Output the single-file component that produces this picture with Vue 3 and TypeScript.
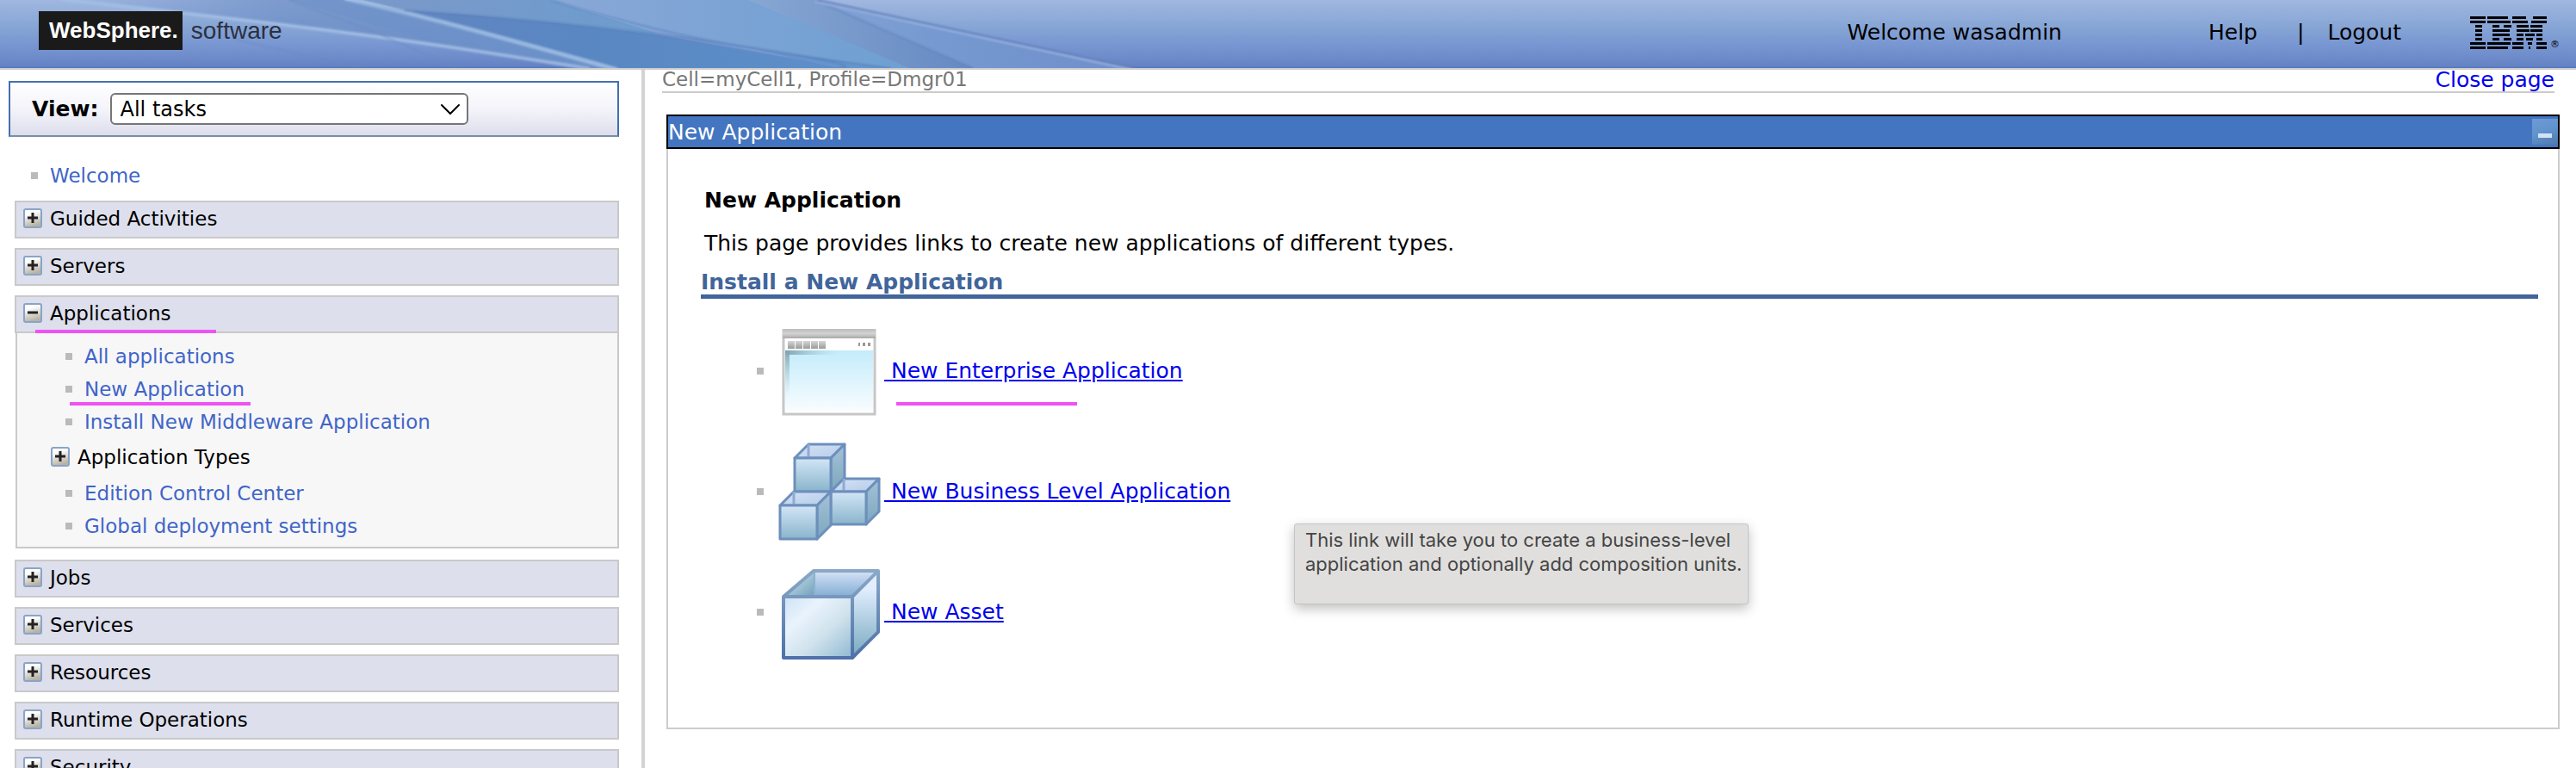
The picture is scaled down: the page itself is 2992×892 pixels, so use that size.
<script setup lang="ts">
import { ref } from 'vue'

interface TaskLink {
  label: string
  marked?: boolean
  folder?: boolean
}
interface TaskGroup {
  label: string
  open?: boolean
  marked?: boolean
  items?: TaskLink[]
}
interface Cube {
  front: string
  side: string
  top: string
  post: string
}

const view = ref('All tasks')
const panelOpen = ref(true)

const groups = ref<TaskGroup[]>([
  { label: 'Guided Activities' },
  { label: 'Servers' },
  {
    label: 'Applications',
    open: true,
    marked: true,
    items: [
      { label: 'All applications' },
      { label: 'New Application', marked: true },
      { label: 'Install New Middleware Application' },
      { label: 'Application Types', folder: true },
      { label: 'Edition Control Center' },
      { label: 'Global deployment settings' },
    ],
  },
  { label: 'Jobs' },
  { label: 'Services' },
  { label: 'Resources' },
  { label: 'Runtime Operations' },
  { label: 'Security' },
])

// Builds the faces of an open box: front rectangle plus a depth offset up and to the right.
function cube(x: number, y: number, w: number, h: number, dx: number, dy: number): Cube {
  return {
    front: `M${x} ${y}h${w}v${h}h${-w}z`,
    side: `M${x + w} ${y}l${dx} ${-dy}v${h}l${-dx} ${dy}z`,
    top: `M${x} ${y}l${dx} ${-dy}h${w}l${-dx} ${dy}z`,
    post: `M${x + dx} ${y - dy}v${dy}`,
  }
}
const cubes: Cube[] = [
  cube(20, 21, 42, 39, 16, 16),
  cube(62, 60, 41, 38, 15, 15),
  cube(3, 76, 43, 39, 16, 16),
]

// Stripes of the eight-bar logo, as [x, width] runs for each bar.
const bars: [number, number][][] = [
  [[0, 18], [20, 24], [49, 16], [73, 16]],
  [[0, 18], [20, 27], [49, 18], [71, 18]],
  [[6, 8], [26, 8], [39, 9], [54, 14], [70, 14]],
  [[6, 8], [26, 20], [54, 15], [70, 14]],
  [[6, 8], [26, 20], [54, 8], [64, 11], [77, 7]],
  [[6, 8], [26, 8], [39, 9], [54, 8], [65, 8], [77, 7]],
  [[0, 18], [20, 27], [49, 13], [67, 5], [77, 12]],
  [[0, 18], [20, 24], [49, 13], [68, 2], [77, 12]],
]
</script>

<template>
  <div class="console">
    <header class="banner">
      <svg class="waves" viewBox="0 0 1320 79" aria-hidden="true">
        <defs>
          <filter id="soft" x="-5%" y="-20%" width="110%" height="140%"><feGaussianBlur stdDeviation="1" /></filter>
          <linearGradient id="left" x1="0" x2="1" y1="0" y2="0">
            <stop offset="0" stop-color="#6b8cc8" stop-opacity="0" />
            <stop offset="0.4" stop-color="#6b8cc4" stop-opacity="0.65" />
            <stop offset="1" stop-color="#6c93c8" />
          </linearGradient>
          <linearGradient id="deep" x1="0" x2="1" y1="0" y2="0">
            <stop offset="0" stop-color="#6585c1" />
            <stop offset="0.5" stop-color="#5987c2" />
            <stop offset="1" stop-color="#5d8fc9" />
          </linearGradient>
          <linearGradient id="mid" x1="0" x2="1" y1="0" y2="0">
            <stop offset="0" stop-color="#7b98c9" />
            <stop offset="1" stop-color="#6b9dce" />
          </linearGradient>
          <linearGradient id="pale" x1="0" x2="1" y1="0" y2="0">
            <stop offset="0" stop-color="#89a8d7" />
            <stop offset="1" stop-color="#6e9fd2" />
          </linearGradient>
          <linearGradient id="fold" x1="0" x2="1" y1="0" y2="0">
            <stop offset="0" stop-color="#87a7d3" />
            <stop offset="1" stop-color="#6589c2" />
          </linearGradient>
          <linearGradient id="tail" x1="0" x2="1" y1="0" y2="0">
            <stop offset="0" stop-color="#83a3d5" />
            <stop offset="0.4" stop-color="#7599d0" />
            <stop offset="1" stop-color="#708ecb" />
          </linearGradient>
        </defs>
        <path d="M60 0H400L717 79H685Q380 28 60 0Z" fill="url(#left)" />
        <path d="M335 0H400L717 79H685L530 56Z" fill="#6b90ca" opacity="0.5" />
        <path d="M400 0L717 79H972Q900 64 774 42Q640 22 470 12Z" fill="url(#deep)" />
        <path d="M470 12Q640 24 774 42L640 0H420Z" fill="url(#mid)" />
        <path d="M640 0H870L1060 79H985Q850 55 774 38Z" fill="url(#pale)" />
        <path d="M870 0H946L1130 79H1056Z" fill="url(#fold)" />
        <path d="M946 0L1316 79H1130Z" fill="url(#tail)" />
        <path d="M880 58Q930 64 1035 79H972Z" fill="#6595cd" />
        <g fill="none" filter="url(#soft)">
          <path d="M70 -1Q260 20 380 35T685 80" stroke="#a5c0e6" stroke-width="4" opacity="0.8" />
          <path d="M400 -2Q500 20 717 81" stroke="#9cbce2" stroke-width="5" opacity="0.9" />
          <path d="M335 0L430 35L530 79" stroke="#6686bf" stroke-width="2" opacity="0.4" />
          <path d="M270 45L420 79" stroke="#6686bf" stroke-width="2" opacity="0.4" />
          <path d="M470 12Q680 26 850 52T972 79" stroke="#5a7eb9" stroke-width="2" opacity="0.7" />
          <path d="M640 0Q770 40 880 57T1035 79" stroke="#5e84bd" stroke-width="2" opacity="0.7" />
          <path d="M946 0L1130 79" stroke="#6485be" stroke-width="2" opacity="0.7" />
          <path d="M950 0L1318 79" stroke="#6380bb" stroke-width="2" />
          <path d="M946 2L1314 81" stroke="#96b0df" stroke-width="2" />
        </g>
      </svg>
      <div class="brand"><span class="product">WebSphere.</span><span class="kind">software</span></div>
      <div class="account">
        <span class="greeting">Welcome wasadmin</span>
        <a class="plain" href="#help">Help</a>
        <span class="pipe">|</span>
        <a class="plain" href="#logout">Logout</a>
        <span class="vendor">
          <svg width="89" height="39" viewBox="0 0 89 39" role="img" aria-label="IBM">
            <g v-for="(runs, i) in bars" :key="i">
              <rect v-for="run in runs" :key="run[0]" :x="run[0]" :y="i * 5 + 1" :width="run[1]" height="3" />
            </g>
          </svg>
          <small>®</small>
        </span>
      </div>
    </header>

    <div class="body">
      <nav class="tasks" aria-label="Tasks">
        <div class="filter">
          <label for="view">View:</label>
          <span class="picker">
            <select id="view" v-model="view">
              <option>All tasks</option>
              <option>My tasks</option>
            </select>
            <svg width="24" height="14" viewBox="0 0 24 14" aria-hidden="true">
              <path d="M2 2L12 12L22 2" fill="none" stroke="#000" stroke-width="2" stroke-linecap="round" />
            </svg>
          </span>
        </div>
        <a class="task home" href="#welcome"><i class="dot"></i>Welcome</a>

        <section v-for="g in groups" :key="g.label" class="group">
          <button class="group-head" type="button" :aria-expanded="!!g.open" @click="g.open = !g.open">
            <svg class="toggle" viewBox="0 0 22 23" aria-hidden="true">
              <defs>
                <linearGradient id="knob" x1="0" x2="0.3" y1="0" y2="1">
                  <stop offset="0.3" stop-color="#fff" />
                  <stop offset="1" stop-color="#b9b2a4" />
                </linearGradient>
              </defs>
              <rect x="1" y="1" width="20" height="21" rx="2" fill="url(#knob)" stroke="#88a5c6" stroke-width="2" />
              <path :d="g.open ? 'M5 11H17' : 'M5 11H17M11 5V17'" stroke="#222" stroke-width="3" />
            </svg>
            <span>{{ g.label }}</span>
            <i v-if="g.marked" class="mark"></i>
          </button>
          <ul v-if="g.open && g.items" class="links">
            <li v-for="l in g.items" :key="l.label" :class="{ folder: l.folder }">
              <button v-if="l.folder" class="sub" type="button" aria-expanded="false">
                <svg class="toggle" viewBox="0 0 22 23" aria-hidden="true">
                  <rect x="1" y="1" width="20" height="21" rx="2" fill="url(#knob)" stroke="#88a5c6" stroke-width="2" />
                  <path d="M5 11H17M11 5V17" stroke="#222" stroke-width="3" />
                </svg>
                <span>{{ l.label }}</span>
              </button>
              <a v-else class="task" href="#task"><i class="dot"></i>{{ l.label }}<i v-if="l.marked" class="mark"></i></a>
            </li>
          </ul>
        </section>
      </nav>

      <main class="work">
        <div class="context">
          <span>Cell=myCell1, Profile=Dmgr01</span>
          <a href="#close">Close page</a>
        </div>
        <section class="panel">
          <div class="panel-bar">
            <span>New Application</span>
            <button type="button" aria-label="Minimize" @click="panelOpen = !panelOpen"><i></i></button>
          </div>
          <div v-if="panelOpen" class="panel-body">
            <h1>New Application</h1>
            <p>This page provides links to create new applications of different types.</p>
            <h2>Install a New Application</h2>
            <ul class="choices">
              <li>
                <i class="dot"></i>
                <svg class="art" viewBox="0 0 124 120" aria-hidden="true">
                  <defs>
                    <linearGradient id="bar" x1="0" x2="0" y1="0" y2="1">
                      <stop offset="0" stop-color="#bdbdbd" />
                      <stop offset="0.5" stop-color="#d2d2d2" />
                      <stop offset="1" stop-color="#a8a8a8" />
                    </linearGradient>
                    <linearGradient id="glass" x1="0" x2="0" y1="0" y2="1">
                      <stop offset="0" stop-color="#c4ecfb" />
                      <stop offset="1" stop-color="#f8fcff" />
                    </linearGradient>
                    <linearGradient id="shadeX" x1="0" x2="1" y1="0" y2="0">
                      <stop offset="0" stop-color="#7fa3b1" />
                      <stop offset="0.6" stop-color="#9fcfe0" stop-opacity="0" />
                    </linearGradient>
                    <linearGradient id="shadeY" x1="0" x2="0" y1="0" y2="1">
                      <stop offset="0" stop-color="#7fa3b1" />
                      <stop offset="0.8" stop-color="#bfe6f2" stop-opacity="0" />
                    </linearGradient>
                    <linearGradient id="block" x1="0" x2="0" y1="0" y2="1">
                      <stop offset="0" stop-color="#d6d6d6" />
                      <stop offset="1" stop-color="#9a9a9a" />
                    </linearGradient>
                  </defs>
                  <rect x="7" y="13" width="106" height="97" fill="#fff" stroke="#c6c6c6" stroke-width="3" />
                  <rect x="6" y="11" width="108" height="11" fill="url(#bar)" />
                  <rect v-for="n in 5" :key="n" :x="n * 9 + 3" y="25" width="8" height="9" fill="url(#block)" />
                  <g fill="#999"><rect x="94" y="27" width="2" height="4" /><rect x="99" y="27" width="3" height="4" /><rect x="105" y="27" width="3" height="4" /></g>
                  <rect x="9" y="36" width="102" height="70" fill="url(#glass)" />
                  <rect x="9" y="36" width="102" height="5" fill="url(#shadeX)" />
                  <rect x="9" y="36" width="5" height="70" fill="url(#shadeY)" />
                </svg>
                <a href="#enterprise">&nbsp;New Enterprise Application</a>
                <i class="mark"></i>
              </li>
              <li>
                <i class="dot"></i>
                <svg class="art" viewBox="0 0 124 120" aria-hidden="true">
                  <defs>
                    <linearGradient id="face" x1="0" x2="0" y1="0" y2="1">
                      <stop offset="0" stop-color="#d3e6f7" />
                      <stop offset="1" stop-color="#89b4cb" />
                    </linearGradient>
                    <linearGradient id="flank" x1="0" x2="0" y1="0" y2="1">
                      <stop offset="0" stop-color="#a6c2d8" />
                      <stop offset="1" stop-color="#7ba7bd" />
                    </linearGradient>
                    <linearGradient id="inner" x1="0" x2="1" y1="0" y2="1">
                      <stop offset="0" stop-color="#d5e3f7" />
                      <stop offset="1" stop-color="#b5cce8" />
                    </linearGradient>
                  </defs>
                  <g v-for="c in cubes" :key="c.front" stroke="#6d8fbc" stroke-width="3" stroke-linejoin="round">
                    <path :d="c.top" fill="url(#inner)" />
                    <path :d="c.post" fill="none" stroke="#8fabd0" />
                    <path :d="c.side" fill="url(#flank)" />
                    <path :d="c.front" fill="url(#face)" />
                  </g>
                </svg>
                <a href="#business">&nbsp;New Business Level Application</a>
                <span class="tip" role="tooltip">This link will take you to create a business-level<br />application and optionally add composition units.</span>
              </li>
              <li>
                <i class="dot"></i>
                <svg class="art" viewBox="0 0 124 120" aria-hidden="true">
                  <defs>
                    <linearGradient id="boxFace" x1="0" x2="1" y1="0" y2="1">
                      <stop offset="0" stop-color="#cde3f6" />
                      <stop offset="0.3" stop-color="#e9f3fc" />
                      <stop offset="0.6" stop-color="#d0e2ec" />
                      <stop offset="1" stop-color="#8fb8d2" />
                    </linearGradient>
                    <linearGradient id="boxSide" x1="0" x2="0" y1="0" y2="1">
                      <stop offset="0.2" stop-color="#e2eeff" />
                      <stop offset="1" stop-color="#76a8bd" />
                    </linearGradient>
                    <linearGradient id="boxBack" x1="0" x2="0" y1="0" y2="1">
                      <stop offset="0" stop-color="#d6e3f7" />
                      <stop offset="1" stop-color="#82add3" />
                    </linearGradient>
                    <linearGradient id="boxLeft" x1="0" x2="1" y1="0" y2="1">
                      <stop offset="0.2" stop-color="#c8dfea" />
                      <stop offset="1" stop-color="#6e9fb9" />
                    </linearGradient>
                    <linearGradient id="rim" x1="0" x2="0" y1="0" y2="1">
                      <stop offset="0" stop-color="#8aa8c6" />
                      <stop offset="1" stop-color="#4f70aa" />
                    </linearGradient>
                  </defs>
                  <path d="M7 42L43 12V42Z" fill="url(#boxLeft)" />
                  <path d="M43 12H117L87 42H43Z" fill="url(#boxBack)" />
                  <path d="M87 42L117 12V83L87 113Z" fill="url(#boxSide)" />
                  <path d="M7 42H87V113H7Z" fill="url(#boxFace)" />
                  <path d="M43 13V42" stroke="#8fb0cc" stroke-width="2" />
                  <path d="M7 42L42 12H117V83L87 113H7ZH87V113M87 42L117 12" fill="none" stroke="url(#rim)" stroke-width="4" stroke-linejoin="round" />
                </svg>
                <a href="#asset">&nbsp;New Asset</a>
              </li>
            </ul>
          </div>
        </section>
      </main>
    </div>
  </div>
</template>

<style>
body {
  margin: 0;
  background: #fff;
}
</style>

<style scoped>
.console {
  display: flex;
  flex-direction: column;
  height: 100vh;
  overflow: hidden;
  font-family: "DejaVu Sans", Verdana, sans-serif;
  font-size: 25px;
  line-height: 30px;
  color: #000;
}
.console * {
  box-sizing: border-box;
}
ul {
  list-style: none;
  margin: 0;
  padding: 0;
}
a {
  color: #0000ee;
}
button {
  font: inherit;
  color: inherit;
}

.banner {
  position: relative;
  flex: none;
  display: flex;
  justify-content: space-between;
  height: 81px;
  border-bottom: 2px solid #ccc;
  background: linear-gradient(#a0b7e0, #86a5d5 40%, #7a98d2 62%, #6f8dcb 82%, #6583c3 97%, #4f76c0);
}
.waves {
  position: absolute;
  top: 0;
  left: 0;
  width: 1320px;
  height: 79px;
}
.brand {
  position: relative;
  display: flex;
  align-items: center;
  align-self: flex-start;
  gap: 10px;
  height: 45px;
  margin: 13px 0 0 45px;
  font-family: "Liberation Sans", Arial, sans-serif;
}
.product {
  padding: 0 5px 0 12px;
  line-height: 45px;
  font-size: 26px;
  font-weight: bold;
  color: #fff;
  background: #1a1a1a;
}
.kind {
  font-size: 28px;
  color: #2b3040;
}
.account {
  display: flex;
  align-items: center;
  height: 75px;
  padding-right: 19px;
}
.plain {
  color: #000;
  text-decoration: none;
}
.greeting {
  margin-right: 170px;
}
.pipe {
  margin: 0 27px 0 46px;
}
.vendor {
  display: flex;
  align-items: flex-end;
  gap: 4px;
  margin-left: 80px;
}
.vendor small {
  font-size: 11px;
  line-height: 10px;
}

.body {
  display: flex;
  flex: 1;
  min-height: 0;
}
.tasks {
  flex: none;
  width: 749px;
  padding: 13px 26px 0 10px;
  overflow: hidden;
  border-right: 4px solid #d3d3d3;
  font-size: 23px;
  line-height: 28px;
}
.filter {
  display: flex;
  align-items: center;
  gap: 13px;
  height: 65px;
  padding: 0 25px;
  border: 2px solid #4470ae;
  border-bottom-color: #7b8da8;
  background: linear-gradient(#fff, #f4f4fa 50%, #dcdeeb);
  font-size: 25px;
}
.filter label {
  font-weight: bold;
}
.picker {
  position: relative;
  flex: none;
  width: 416px;
  height: 37px;
}
.picker select {
  width: 100%;
  height: 100%;
  padding: 1px 40px 0 10px;
  appearance: none;
  border: 2px solid #767676;
  border-radius: 6px;
  background: #fff;
  font: 24px "DejaVu Sans", Verdana, sans-serif;
  color: #000;
}
.picker svg {
  position: absolute;
  top: 12px;
  right: 9px;
}
.task {
  position: relative;
  display: flex;
  align-items: center;
  gap: 14px;
  height: 38px;
  color: #4065c8;
  text-decoration: none;
}
.dot {
  flex: none;
  width: 8px;
  height: 8px;
  background: #bababa;
}
.home {
  margin: 26px 0 10px 26px;
}
.group {
  margin: 0 0 11px 7px;
}
.group-head {
  position: relative;
  display: flex;
  align-items: flex-start;
  gap: 9px;
  width: 100%;
  height: 44px;
  padding: 5px 8px;
  border: 2px solid #c9c9c9;
  background: #dddfec;
  text-align: left;
}
.toggle {
  flex: none;
  width: 22px;
  height: 23px;
  margin-top: 2px;
}
.links {
  margin: 0 0 13px 1px;
  padding: 8px 0 5px;
  border: 2px solid #c9c9c9;
  border-top: 0;
  background: #f7f7f7;
}
.links .task {
  margin-left: 56px;
}
.folder {
  height: 45px;
  padding: 8px 0 0 39px;
}
.sub {
  display: flex;
  align-items: flex-start;
  gap: 9px;
  padding: 0;
  border: 0;
  background: none;
}
.mark {
  position: absolute;
  left: 22px;
  bottom: -2px;
  width: 210px;
  height: 4px;
  background: #ee52f4;
}
.links .mark {
  left: 5px;
  bottom: 0;
}

.work {
  flex: 1;
  min-width: 0;
  padding: 0 19px 0 20px;
}
.context {
  display: flex;
  justify-content: space-between;
  align-items: flex-start;
  height: 27px;
  margin-right: 6px;
  border-bottom: 2px solid #ccc;
  line-height: 23px;
  color: #777;
}
.context span {
  font-size: 23px;
}
.context a {
  text-decoration: none;
}
.panel {
  margin: 25px 0 0 5px;
}
.panel-bar {
  display: flex;
  justify-content: space-between;
  align-items: center;
  height: 40px;
  border: 2px solid #000;
  background: #4475c1;
  line-height: 32px;
  color: #fff;
}
.panel-bar span {
  padding-top: 2px;
}
.panel-bar button {
  display: flex;
  justify-content: center;
  align-items: flex-end;
  width: 30px;
  height: 30px;
  padding: 0 0 8px;
  border: 0;
  background: linear-gradient(160deg, #6f9ad6, #6093cc 50%, #4f78ac);
}
.panel-bar i {
  width: 16px;
  height: 5px;
  background: #d3e3f6;
}
.panel-body {
  padding: 45px 23px 64px 38px;
  border: 2px solid #ccc;
  border-top: 0;
}
h1,
h2,
p {
  margin: 0;
  font-size: 25px;
}
h1 {
  padding-left: 4px;
}
p {
  padding: 20px 0 0 4px;
}
h2 {
  margin-top: 15px;
  border-bottom: 5px solid #41659a;
  line-height: 29px;
  color: #41659a;
}
.choices {
  padding: 14px 0 0 65px;
}
.choices li {
  position: relative;
  display: flex;
  align-items: center;
  height: 140px;
}
.choices .art {
  flex: none;
  width: 124px;
  height: 120px;
  margin-left: 16px;
}
.choices .mark {
  left: 162px;
  bottom: 30px;
}
.tip {
  position: absolute;
  top: 107px;
  left: 624px;
  width: 528px;
  height: 94px;
  padding: 4px 0 0 12px;
  border: 1px solid #c4c4c4;
  border-radius: 3px;
  background: #e0dfdd;
  box-shadow: 0 5px 14px rgba(0, 0, 0, 0.25);
  font-family: Inter, sans-serif;
  font-size: 22px;
  line-height: 28px;
  white-space: nowrap;
  color: #454545;
  z-index: 1;
}
</style>
